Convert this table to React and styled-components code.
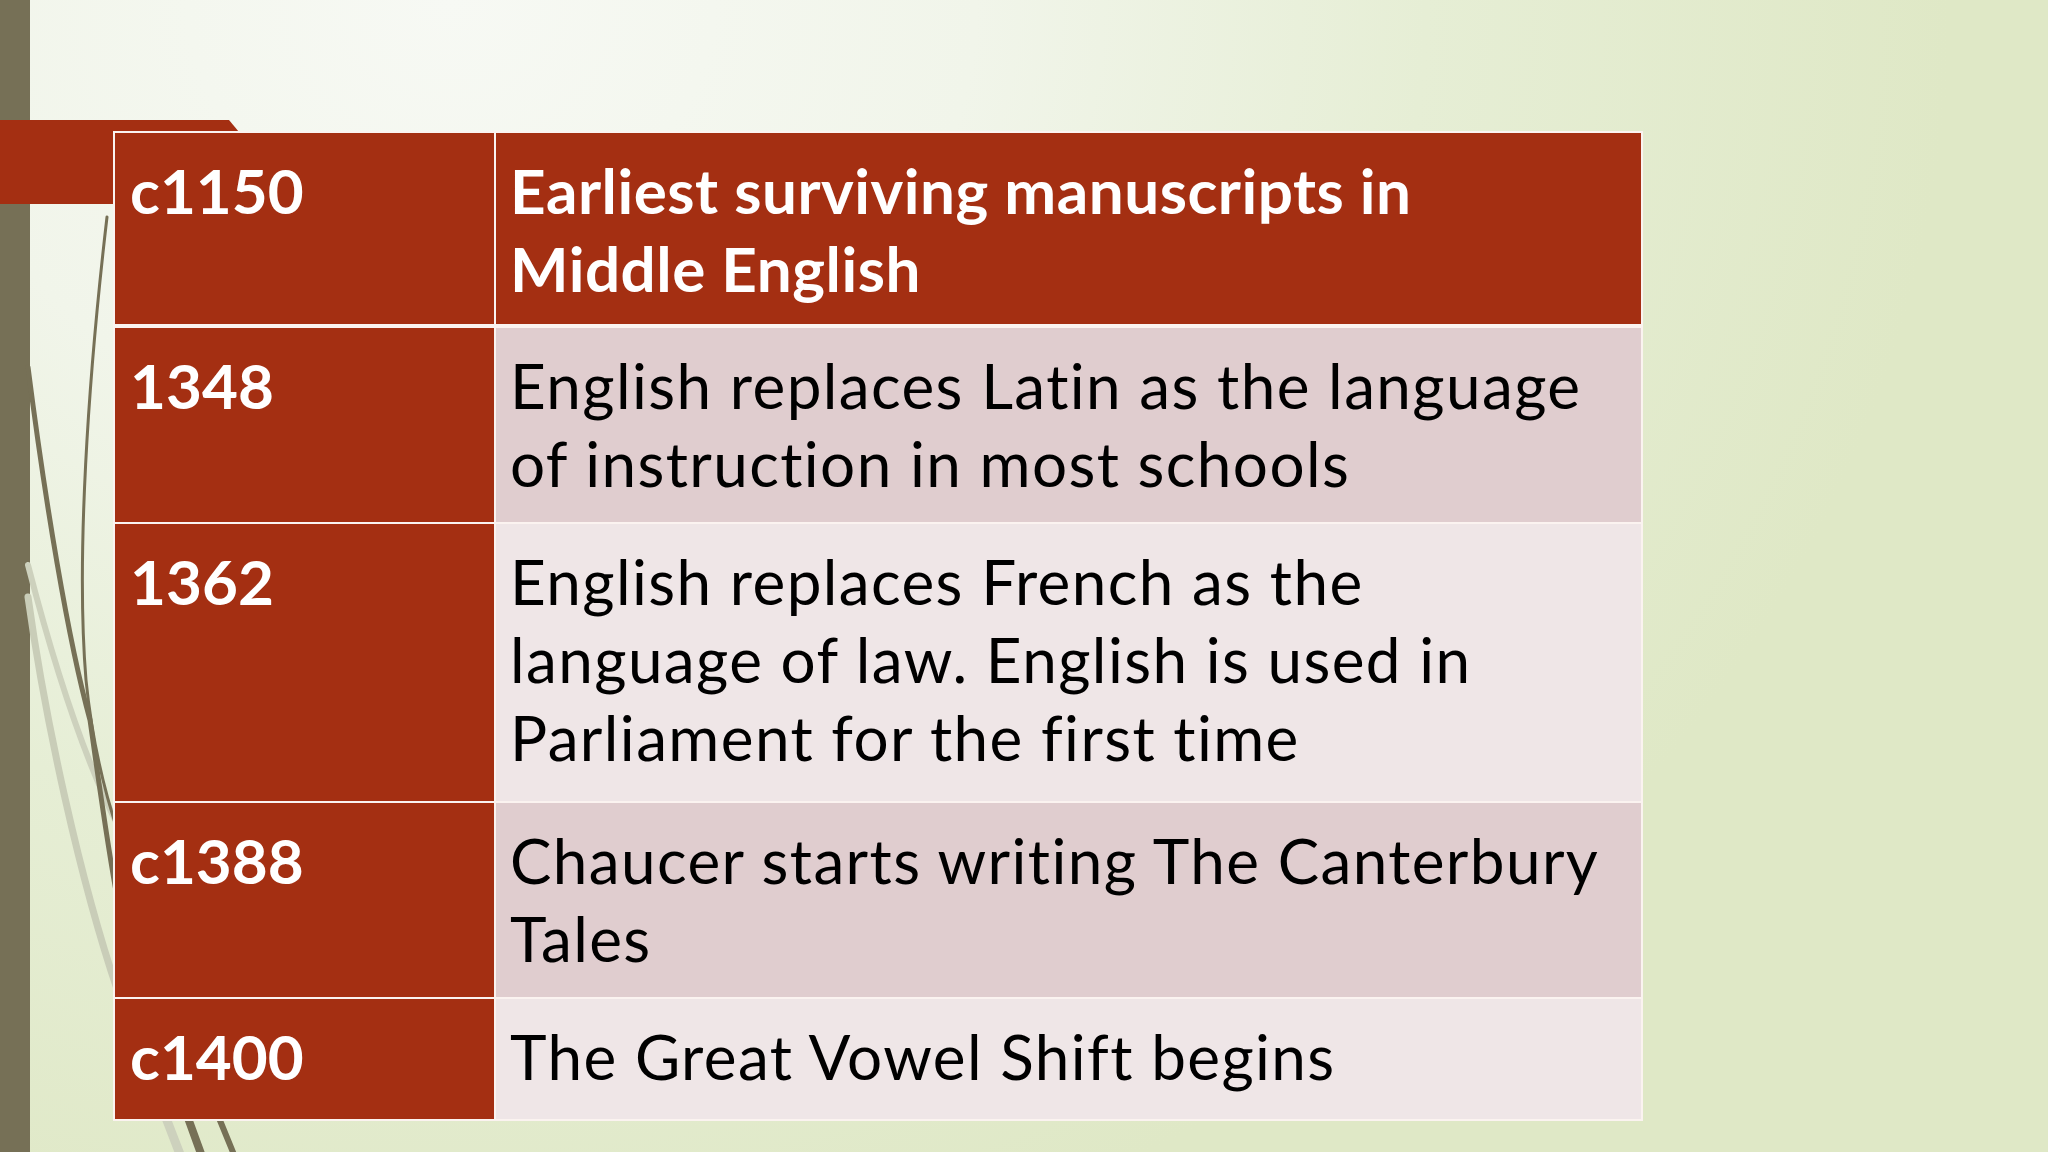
import React from 'react';
import styled, { createGlobalStyle } from 'styled-components';

const GlobalStyle = createGlobalStyle`
  html, body {
    margin: 0;
    padding: 0;
  }

  body {
    font-family: Lato, "Open Sans", "Liberation Sans", sans-serif;
  }
`;

const Slide = styled.div`
  position: relative;
  box-sizing: border-box;
  width: 2048px;
  height: 1152px;
  overflow: hidden;
  padding: 131px 0 0 113px;
  background: radial-gradient(
    ellipse 1500px 1300px at 22% 0%,
    #f7f9f4 0%,
    #f1f5ea 35%,
    #e6eed5 65%,
    #dfe8c6 100%
  );
`;

const Decor = styled.svg`
  position: absolute;
  top: 0;
  left: 0;
  width: 2048px;
  height: 1152px;
  pointer-events: none;
`;

const Table = styled.div`
  position: relative;
  z-index: 1;
  box-sizing: border-box;
  width: 1530px;
  display: grid;
  grid-template-columns: 379px minmax(0, 1fr);
  grid-template-rows: 193px 194px 277px 194px 120px;
  gap: 2px;
  padding: 2px;
  background: #fbf3f0;
`;

const Cell = styled.div`
  box-sizing: border-box;
  padding: 18px 14px 0;
  font-size: 62px;
  line-height: 78px;
  white-space: nowrap;
  overflow: hidden;
  margin-bottom: ${(p) => (p.$head ? '2px' : '0')};
`;

const DateCell = styled(Cell)`
  padding-left: 15px;
  background: #a42f12;
  color: #ffffff;
  font-weight: 700;
  letter-spacing: 0;
`;

const tones = {
  head: '#a42f12',
  dark: '#e0cdcf',
  light: '#efe6e7',
};

const TextCell = styled(Cell)`
  background: ${(p) => tones[p.$tone]};
  color: ${(p) => (p.$tone === 'head' ? '#ffffff' : '#000000')};
  font-weight: ${(p) => (p.$tone === 'head' ? 700 : 400)};
  letter-spacing: ${(p) => (p.$tone === 'head' ? '0.5px' : '1.4px')};
`;

const rows = [
  {
    date: 'c1150',
    tone: 'head',
    lines: ['Earliest surviving manuscripts in', 'Middle English'],
  },
  {
    date: '1348',
    tone: 'dark',
    lines: ['English replaces Latin as the language', 'of instruction in most schools'],
  },
  {
    date: '1362',
    tone: 'light',
    lines: [
      'English replaces French as the',
      'language of law. English is used in',
      'Parliament for the first time',
    ],
  },
  {
    date: 'c1388',
    tone: 'dark',
    lines: ['Chaucer starts writing The Canterbury', 'Tales'],
  },
  {
    date: 'c1400',
    tone: 'light',
    lines: ['The Great Vowel Shift begins'],
  },
];

function Leaves() {
  return (
    <Decor viewBox="0 0 2048 1152">
      <rect x="0" y="0" width="30" height="1152" fill="#767056" />
      <g fill="none" strokeLinecap="round">
        <path d="M28 565 C 50 650 80 750 118 826" stroke="#cdd1bd" strokeWidth="6" />
        <path d="M28 597 C 45 720 80 880 118 992" stroke="#c9cdb8" strokeWidth="7" />
        <path d="M166 1118 L 183 1162" stroke="#cdd1bd" strokeWidth="9" />
        <path d="M107 217 C 88 380 76 560 86 680 C 92 740 104 790 118 832" stroke="#767056" strokeWidth="3" />
        <path d="M28 367 C 45 500 68 640 90 720 C 100 790 108 850 118 902" stroke="#767056" strokeWidth="5" />
        <path d="M188 1118 L 204 1162" stroke="#767056" strokeWidth="8" />
        <path d="M219 1118 L 237 1162" stroke="#767056" strokeWidth="6" />
      </g>
      <polygon points="0,120 229,120 239,132 239,204 0,204" fill="#a42f12" />
    </Decor>
  );
}

export default function App() {
  return (
    <>
      <GlobalStyle />
      <Slide>
        <Leaves />
        <Table>
          {rows.map((row) => (
            <React.Fragment key={row.date}>
              <DateCell $head={row.tone === 'head'}>{row.date}</DateCell>
              <TextCell $tone={row.tone} $head={row.tone === 'head'}>
                {row.lines.map((line, i) => (
                  <React.Fragment key={line}>
                    {i > 0 && <br />}
                    {line}
                  </React.Fragment>
                ))}
              </TextCell>
            </React.Fragment>
          ))}
        </Table>
      </Slide>
    </>
  );
}
